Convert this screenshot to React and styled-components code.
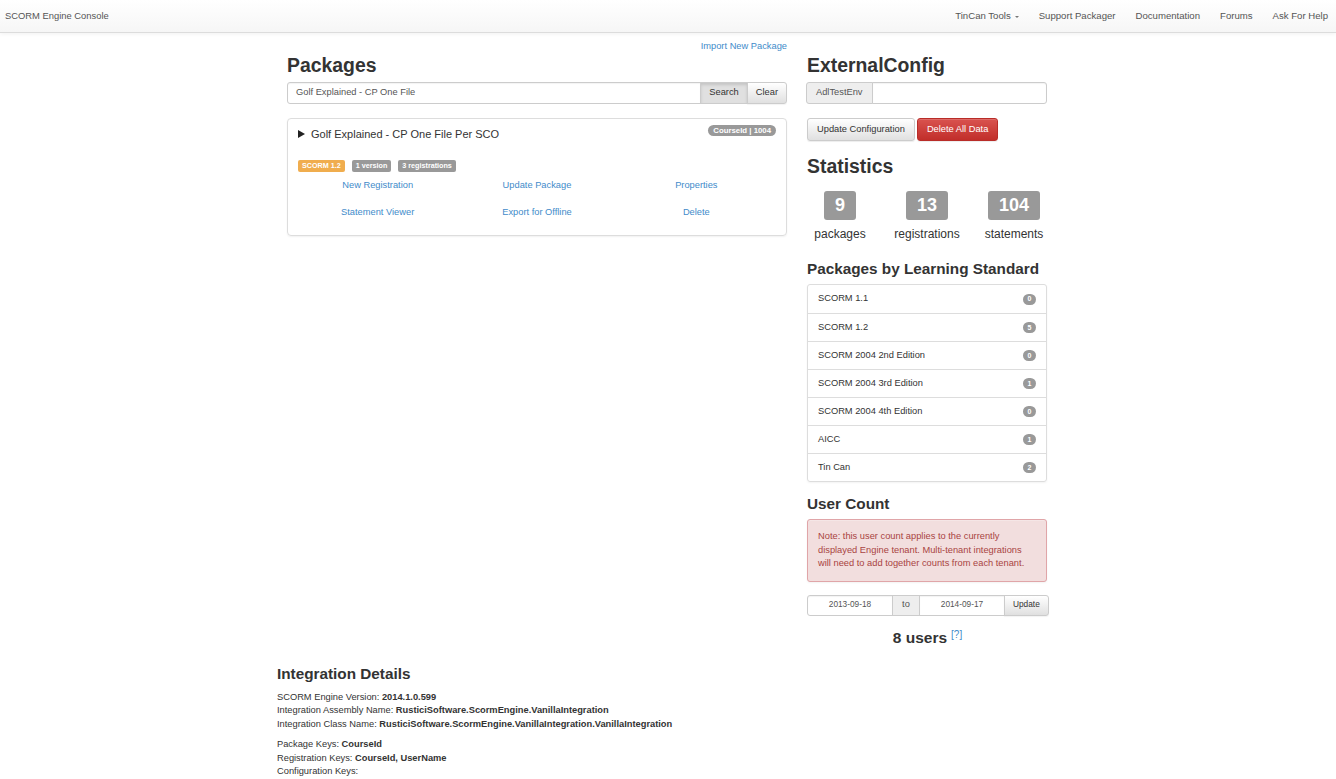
import React from "react";
import styled, { createGlobalStyle } from "styled-components";

const Global = createGlobalStyle`
  html, body { margin: 0; padding: 0; background: #fff; }
  body {
    font-family: "Liberation Sans", Arial, Helvetica, sans-serif;
    font-size: 9.3px;
    line-height: 13.5px;
    color: #333;
  }
  * { box-sizing: border-box; }
`;

const Navbar = styled.div`
  height: 33px;
  display: flex;
  align-items: center;
  justify-content: space-between;
  background: linear-gradient(#ffffff, #f6f6f6);
  border-bottom: 1px solid #dcdcdc;
  box-shadow: 0 1px 4px rgba(0, 0, 0, 0.06);
  color: #555;
`;

const Brand = styled.div`
  padding-left: 5px;
  font-size: 9.4px;
`;

const NavList = styled.div`
  display: flex;
  margin-right: -2px;
`;

const NavItem = styled.a`
  padding: 0 10px;
  color: #555;
  font-size: 9.6px;
  text-decoration: none;
  display: flex;
  align-items: center;
  gap: 4px;
`;

const Caret = styled.span`
  display: inline-block;
  width: 0;
  height: 0;
  border-left: 2.5px solid transparent;
  border-right: 2.5px solid transparent;
  border-top: 2.5px solid #777;
  margin-top: 1px;
`;

const Container = styled.div`
  width: 782px;
  padding-right: 2px;
  margin: 0 auto;
`;

const Row = styled.div`
  display: flex;
  gap: 20px;
  padding: 0 10px;
`;

const LeftCol = styled.div`
  width: 500px;
`;

const RightCol = styled.div`
  width: 240px;
  padding-top: 21px;
`;

const TopLink = styled.div`
  text-align: right;
  margin-top: 6px;
  height: 15px;
  line-height: 15px;
`;

const Link = styled.a`
  color: #428bca;
  text-decoration: none;
  cursor: pointer;
`;

const H2 = styled.h2`
  margin: ${(p) => p.mt || 0}px 0 ${(p) => p.mb || 0}px;
  font-size: 19.4px;
  line-height: 22px;
  font-weight: bold;
  color: #333;
`;

const H3 = styled.h3`
  margin: ${(p) => p.mt || 0}px 0 ${(p) => p.mb || 0}px;
  font-size: 15.3px;
  line-height: 19px;
  font-weight: bold;
  color: #333;
  white-space: nowrap;
`;

const InputGroup = styled.div`
  display: flex;
  height: ${(p) => p.h || 22}px;
  margin-top: ${(p) => p.mt || 0}px;
`;

const TextInput = styled.div`
  flex: ${(p) => (p.w ? "none" : 1)};
  width: ${(p) => (p.w ? p.w + "px" : "auto")};
  border: 1px solid #ccc;
  border-radius: ${(p) => p.radius || "0"};
  padding: 0 8px;
  display: flex;
  align-items: center;
  justify-content: ${(p) => (p.center ? "center" : "flex-start")};
  color: #555;
  background: #fff;
  font-size: ${(p) => p.fs || 9.3}px;
  box-shadow: inset 0 1px 1px rgba(0, 0, 0, 0.05);
`;

const Addon = styled.div`
  flex: none;
  width: ${(p) => (p.w ? p.w + "px" : "auto")};
  padding: 0 ${(p) => p.px || 9}px;
  border: 1px solid #ccc;
  background: #eee;
  display: flex;
  align-items: center;
  justify-content: center;
  color: #555;
  border-radius: ${(p) => p.radius || "0"};
  margin: 0 -1px;
  font-size: ${(p) => p.fs || 9.3}px;
  position: relative;
  z-index: 1;
`;

const GroupButton = styled.div`
  flex: ${(p) => (p.grow ? 1 : "none")};
  padding: 0 ${(p) => p.px || 8}px;
  border: 1px solid #ccc;
  margin-left: -1px;
  display: flex;
  align-items: center;
  justify-content: center;
  color: #333;
  font-size: ${(p) => p.fs || 9.3}px;
  border-radius: ${(p) => p.radius || "0"};
  background: ${(p) =>
    p.active ? "#e0e0e0" : "linear-gradient(#ffffff, #e0e0e0)"};
  box-shadow: ${(p) =>
    p.active ? "inset 0 2px 3px rgba(0,0,0,0.12)" : "0 1px 1px rgba(0,0,0,0.05)"};
`;

const Panel = styled.div`
  margin-top: 14px;
  border: 1px solid #ddd;
  border-radius: 4px;
  box-shadow: 0 1px 2px rgba(0, 0, 0, 0.06);
  padding: 7px 10px 9px;
  height: 118px;
`;

const PanelHead = styled.div`
  display: flex;
  justify-content: space-between;
  align-items: flex-start;
`;

const PanelTitle = styled.div`
  display: flex;
  align-items: center;
  gap: 6px;
  font-size: 11px;
  line-height: 16px;
  color: #333;
`;

const Triangle = styled.span`
  display: inline-block;
  width: 0;
  height: 0;
  border-top: 4px solid transparent;
  border-bottom: 4px solid transparent;
  border-left: 7px solid #222;
`;

const Pill = styled.span`
  background: #999;
  color: #fff;
  font-size: 7.8px;
  font-weight: bold;
  border-radius: 6px;
  padding: 0 5px;
  line-height: 11px;
  height: 11px;
  margin-top: -1px;
`;

const LabelRow = styled.div`
  display: flex;
  gap: 7px;
  margin-top: 18px;
`;

const Label = styled.span`
  background: ${(p) => p.bg || "#999"};
  color: #fff;
  font-size: 7.2px;
  font-weight: bold;
  border-radius: 2px;
  padding: 0 4px;
  height: 12px;
  line-height: 12px;
`;

const LinkGrid = styled.div`
  display: grid;
  grid-template-columns: repeat(3, 1fr);
  grid-auto-rows: 27px;
  text-align: center;
  align-items: center;
`;

const ConfigButtons = styled.div`
  display: flex;
  gap: 2px;
  margin-top: 14px;
`;

const Btn = styled.div`
  height: 23px;
  padding: 0 9px;
  display: flex;
  align-items: center;
  font-size: 9.3px;
  border-radius: 3px;
  border: 1px solid ${(p) => (p.danger ? "#b92c28" : "#ccc")};
  color: ${(p) => (p.danger ? "#fff" : "#333")};
  background: ${(p) =>
    p.danger
      ? "linear-gradient(#d9534f, #c12e2a)"
      : "linear-gradient(#ffffff, #e0e0e0)"};
  box-shadow: inset 0 1px 0 rgba(255, 255, 255, 0.15), 0 1px 1px rgba(0, 0, 0, 0.075);
`;

const Stats = styled.div`
  display: grid;
  grid-template-columns: repeat(3, 87px);
  justify-content: center;
  margin-top: 14px;
`;

const Stat = styled.div`
  display: flex;
  flex-direction: column;
  align-items: center;
`;

const StatNum = styled.div`
  background: #999;
  color: #fff;
  font-size: 18px;
  font-weight: bold;
  height: 29px;
  line-height: 29px;
  padding: 0 10.5px;
  border-radius: 3px;
`;

const StatLabel = styled.div`
  font-size: 12px;
  line-height: 14px;
  margin-top: 7px;
  color: #333;
`;

const ListGroup = styled.div`
  margin-top: 6px;
  border: 1px solid #ddd;
  border-radius: 3px;
  box-shadow: 0 1px 2px rgba(0, 0, 0, 0.05);
`;

const ListItem = styled.div`
  height: 28px;
  display: flex;
  align-items: center;
  justify-content: space-between;
  padding: 0 10px;
  border-top: ${(p) => (p.first ? "none" : "1px solid #ddd")};
  font-size: 9.3px;
  color: #333;
`;

const Badge = styled.span`
  width: 13px;
  height: 11px;
  border-radius: 6px;
  background: #999;
  color: #fff;
  font-size: 7px;
  font-weight: bold;
  display: flex;
  align-items: center;
  justify-content: center;
`;

const Alert = styled.div`
  margin-top: 6px;
  background: #f2dede;
  border: 1px solid #e0a5a8;
  border-radius: 3px;
  color: #a94442;
  padding: 10px 12px 10px 10px;
  font-size: 9.3px;
  line-height: 13.5px;
  box-shadow: inset 0 1px 0 rgba(255, 255, 255, 0.25), 0 1px 2px rgba(0, 0, 0, 0.05);
`;

const UsersLine = styled.div`
  text-align: center;
  margin-top: 13px;
  font-size: 15.5px;
  line-height: 18px;
  font-weight: bold;
  color: #333;
  padding-left: 1px;
`;

const Sup = styled.sup`
  font-size: 10px;
  font-weight: normal;
  vertical-align: 5px;
  line-height: 0;
  margin-left: 4px;
`;

const Integration = styled.div`
  margin-top: 17px;
  padding-bottom: 20px;
`;

const Para = styled.p`
  margin: ${(p) => p.mt || 0}px 0 0;
  font-size: 9.3px;
  line-height: 13.5px;
`;

const App = () => {
  const standards = [
    ["SCORM 1.1", 0],
    ["SCORM 1.2", 5],
    ["SCORM 2004 2nd Edition", 0],
    ["SCORM 2004 3rd Edition", 1],
    ["SCORM 2004 4th Edition", 0],
    ["AICC", 1],
    ["Tin Can", 2],
  ];
  return (
    <>
      <Global />
      <Navbar>
        <Brand>SCORM Engine Console</Brand>
        <NavList>
          <NavItem>
            TinCan Tools <Caret />
          </NavItem>
          <NavItem>Support Packager</NavItem>
          <NavItem>Documentation</NavItem>
          <NavItem>Forums</NavItem>
          <NavItem>Ask For Help</NavItem>
        </NavList>
      </Navbar>
      <Container>
        <Row>
          <LeftCol>
            <TopLink>
              <Link>Import New Package</Link>
            </TopLink>
            <H2 mb={6}>Packages</H2>
            <InputGroup>
              <TextInput radius="3px 0 0 3px">Golf Explained - CP One File</TextInput>
              <GroupButton active px={8}>Search</GroupButton>
              <GroupButton px={8} radius="0 3px 3px 0">Clear</GroupButton>
            </InputGroup>
            <Panel>
              <PanelHead>
                <PanelTitle>
                  <Triangle />
                  Golf Explained - CP One File Per SCO
                </PanelTitle>
                <Pill>CourseId | 1004</Pill>
              </PanelHead>
              <LabelRow>
                <Label bg="#f0ad4e">SCORM 1.2</Label>
                <Label>1 version</Label>
                <Label>3 registrations</Label>
              </LabelRow>
              <LinkGrid>
                <div><Link>New Registration</Link></div>
                <div><Link>Update Package</Link></div>
                <div><Link>Properties</Link></div>
                <div><Link>Statement Viewer</Link></div>
                <div><Link>Export for Offline</Link></div>
                <div><Link>Delete</Link></div>
              </LinkGrid>
            </Panel>
          </LeftCol>
          <RightCol>
            <H2 mb={6}>ExternalConfig</H2>
            <InputGroup>
              <Addon radius="3px 0 0 3px">AdlTestEnv</Addon>
              <TextInput radius="0 3px 3px 0" />
            </InputGroup>
            <ConfigButtons>
              <Btn>Update Configuration</Btn>
              <Btn danger>Delete All Data</Btn>
            </ConfigButtons>
            <H2 mt={14}>Statistics</H2>
            <Stats>
              <Stat>
                <StatNum>9</StatNum>
                <StatLabel>packages</StatLabel>
              </Stat>
              <Stat>
                <StatNum>13</StatNum>
                <StatLabel>registrations</StatLabel>
              </Stat>
              <Stat>
                <StatNum>104</StatNum>
                <StatLabel>statements</StatLabel>
              </Stat>
            </Stats>
            <H3 mt={18}>Packages by Learning Standard</H3>
            <ListGroup>
              {standards.map(([name, n], i) => (
                <ListItem key={name} first={i === 0}>
                  {name}
                  <Badge>{n}</Badge>
                </ListItem>
              ))}
            </ListGroup>
            <H3 mt={12}>User Count</H3>
            <Alert>
              Note: this user count applies to the currently displayed Engine
              tenant. Multi-tenant integrations will need to add together counts
              from each tenant.
            </Alert>
            <InputGroup h={21} mt={13}>
              <TextInput center w={86} fs={8.3} radius="3px 0 0 3px">2013-09-18</TextInput>
              <Addon w={28} px={0}>to</Addon>
              <TextInput center w={86} fs={8.3}>2014-09-17</TextInput>
              <GroupButton grow px={0} fs={8.3} radius="0 3px 3px 0">Update</GroupButton>
            </InputGroup>
            <UsersLine>
              8 users<Sup><Link>[?]</Link></Sup>
            </UsersLine>
          </RightCol>
        </Row>
        <Integration>
          <H3>Integration Details</H3>
          <Para mt={8}>
            SCORM Engine Version: <b>2014.1.0.599</b>
            <br />
            Integration Assembly Name: <b>RusticiSoftware.ScormEngine.VanillaIntegration</b>
            <br />
            Integration Class Name: <b>RusticiSoftware.ScormEngine.VanillaIntegration.VanillaIntegration</b>
          </Para>
          <Para mt={7}>
            Package Keys: <b>CourseId</b>
            <br />
            Registration Keys: <b>CourseId, UserName</b>
            <br />
            Configuration Keys:
          </Para>
        </Integration>
      </Container>
    </>
  );
};

export default App;
